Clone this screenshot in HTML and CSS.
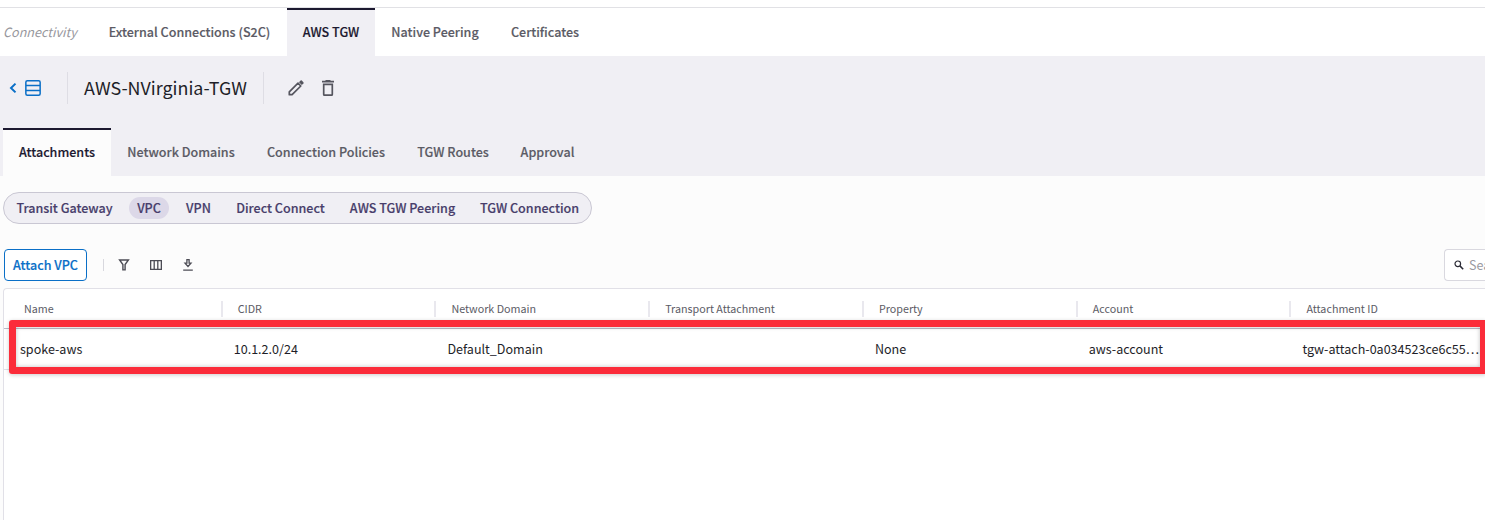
FILE: index.html
```html
<!DOCTYPE html>
<html lang="en">
<head>
<meta charset="utf-8">
<title>AWS TGW</title>
<link rel="stylesheet" href="styles.css">
</head>
<body>
<nav class="topnav">
  <span class="section-label">Connectivity</span>
  <a class="tab tab-external"><span>External Connections (S2C)</span></a>
  <a class="tab tab-aws active"><span>AWS TGW</span></a>
  <a class="tab tab-native"><span>Native Peering</span></a>
  <a class="tab tab-cert"><span>Certificates</span></a>
</nav>
<header class="page-head">
  <div class="title-row">
    <div class="back">
      <svg width="8" height="12" viewBox="0 0 8 12"><path d="M6.500 1.600 2 6l4.500 4.400" fill="none" stroke="#0a6fc7" stroke-width="2"/></svg>
      <svg width="16" height="16" viewBox="0 0 16 16" fill="none" stroke="#0a6fc7" stroke-width="1.500"><rect x=".85" y=".85" width="14.300" height="14.300" rx="1.500"/><path d="M1 5.600h14M1 10.400h14"/></svg>
    </div>
    <h1 class="title">AWS-NVirginia-TGW</h1>
    <div class="actions">
      <svg width="16" height="16" viewBox="0 0 16 16"><path d="M1.300 14.700v-2.800l8.700-8.700 2.800 2.800-8.700 8.700z" fill="none" stroke="#55555e" stroke-width="1.700" stroke-linejoin="round"/><path d="M11 2.200 12.600.6q.6-.5 1.200 0l1.600 1.600q.5.6 0 1.200L13.800 5z" fill="#55555e"/></svg>
      <svg width="16" height="16" viewBox="0 0 16 16" fill="none" stroke="#55555e" stroke-width="1.700"><path d="M2 1.700h12M5.500.9h5"/><path d="M3.700 4.300h8.600v10.100q0 .7-.7.7H4.400q-.7 0-.7-.7z"/></svg>
    </div>
  </div>
  <nav class="subnav">
    <a class="tab tab-attach active"><span>Attachments</span></a>
    <a class="tab tab-domains"><span>Network Domains</span></a>
    <a class="tab tab-policies"><span>Connection Policies</span></a>
    <a class="tab tab-routes"><span>TGW Routes</span></a>
    <a class="tab tab-approval"><span>Approval</span></a>
  </nav>
</header>
<main class="content">
  <div class="pills">
    <a class="pill pill-tg">Transit Gateway</a>
    <a class="pill pill-vpc selected">VPC</a>
    <a class="pill pill-vpn">VPN</a>
    <a class="pill pill-dc">Direct Connect</a>
    <a class="pill pill-peer">AWS TGW Peering</a>
    <a class="pill pill-conn">TGW Connection</a>
  </div>
  <div class="toolbar">
    <button class="attach">Attach VPC</button>
    <div class="tools">
      <svg width="12" height="12" viewBox="0 0 12 12" fill="none" stroke="#4c4c55" stroke-width="1.400"><path d="M1.600 1h8.800L7.100 5.500v5.400H4.900V5.500z"/></svg>
      <svg width="12" height="12" viewBox="0 0 12 12" fill="none" stroke="#4c4c55" stroke-width="1.300"><path d="M.650 1.650h10.700v8.700H.650zM4.200 1.500v9M7.800 1.500v9"/></svg>
      <svg width="12" height="12" viewBox="0 0 12 12" fill="none" stroke="#4c4c55" stroke-width="1.300"><path d="M4.900.7h2.200v3.400h1.900L6 7.500 3 4.100h1.900zM1.200 11.100h9.600"/></svg>
    </div>
    <div class="search">
      <svg width="10" height="10" viewBox="0 0 10 10" fill="none" stroke="#2b2b35" stroke-width="1.200"><circle cx="3.800" cy="3.800" r="2.800"/><path d="M5.900 5.900 9.200 9.200" stroke-width="1.500"/></svg>
      <span>Search</span>
    </div>
  </div>
  <section class="table">
    <div class="row head">
      <div>Name</div><div>CIDR</div><div>Network Domain</div><div>Transport Attachment</div><div>Property</div><div>Account</div><div>Attachment ID</div>
    </div>
    <div class="row body">
      <div>spoke-aws</div><div>10.1.2.0/24</div><div>Default_Domain</div><div></div><div>None</div><div>aws-account</div><div>tgw-attach-0a034523ce6c55…</div>
    </div>
    <div class="highlight"></div>
  </section>
</main>
</body>
</html>
```
FILE: styles.css
```css
* { box-sizing: border-box; }
body {
  margin: 0;
  width: 1485px;
  height: 520px;
  overflow: hidden;
  display: flex;
  flex-direction: column;
  background: #fcfcfc;
  color: #1e1e28;
  font-family: "Noto Sans CJK SC", "Noto Sans", sans-serif;
  font-size: 12.56px;
  line-height: 20px;
}
svg { display: block; flex: none; }
.topnav {
  margin-top: 7px;
  height: 49px;
  border-top: 1px solid #e1e1e5;
  background: #fff;
  box-shadow: 0 -7px #fff;
  display: flex;
}
.section-label {
  width: 93px;
  padding: 14px 0 0 3px;
  font-style: italic;
  font-size: 12.6px;
  color: #97979d;
}
.tab {
  display: flex;
  justify-content: center;
  padding-top: 14px;
  height: 48px;
  font-weight: 500;
  color: #5b5b65;
  white-space: nowrap;
}
.tab, .pill, .attach { -webkit-text-stroke: .15px currentColor; }
.tab.active {
  border-top: 2px solid #1c1930;
  padding-top: 12px;
  color: #1c1930;
}
.topnav .active { background: #f0eff4; }
.tab-external { width: 194px; padding-right: 1px; }
.tab-aws { width: 88px; }
.tab-native { width: 120px; }
.tab-cert { width: 100px; }
.page-head {
  height: 120px;
  flex: none;
  background: #f0eff4;
}
.title-row {
  height: 72px;
  padding-top: 16px;
  display: flex;
}
.back {
  width: 68px;
  height: 32px;
  padding-left: 9px;
  border-right: 1px solid #dedde4;
  display: flex;
  align-items: center;
  gap: 8px;
}
.title {
  margin: 0;
  width: 196px;
  height: 32px;
  padding-left: 16px;
  border-right: 1px solid #dedde4;
  font-size: 17.9px;
  font-weight: 400;
  line-height: 30px;
  white-space: nowrap;
}
.actions {
  padding-left: 24px;
  height: 32px;
  display: flex;
  align-items: center;
  gap: 16px;
}
.subnav { display: flex; padding-left: 3px; }
.subnav .active { background: #fcfcfc; }
.tab-attach { width: 108px; }
.tab-domains { width: 140px; }
.tab-policies { width: 150px; }
.tab-routes { width: 104px; }
.tab-approval { width: 85px; }
.content {
  flex: 1;
  padding: 16px 0 0 3px;
  display: flex;
  flex-direction: column;
}
.pills {
  width: 589px;
  height: 32px;
  flex: none;
  padding-left: 2px;
  border: 1px solid #c9c7d3;
  border-radius: 16px;
  background: #f0eff4;
  display: flex;
  align-items: center;
}
.pill {
  flex: none;
  height: 22px;
  line-height: 22px;
  border-radius: 11px;
  text-align: center;
  white-space: nowrap;
  font-weight: 500;
  color: #483e6b;
}
.pill.selected { background: #dcd8e8; }
.pill-tg { width: 117px; margin-right: 6px; }
.pill-vpc { width: 40px; }
.pill-vpn { width: 59px; }
.pill-dc { width: 105px; margin-right: 9px; }
.pill-peer { width: 121px; }
.pill-conn { width: 101px; margin-left: 16px; }
.toolbar {
  height: 64px;
  flex: none;
  padding: 25px 0 0 1px;
  display: flex;
}
.attach {
  width: 83px;
  height: 32px;
  padding: 0;
  border: 1px solid #0a6fc7;
  border-radius: 4px;
  background: #fff;
  color: #0a6fc7;
  font: 500 12.56px/30px "Noto Sans CJK SC", "Noto Sans", sans-serif;
  white-space: nowrap;
}
.tools {
  margin: 10px 0 0 16px;
  height: 12px;
  padding-left: 14px;
  border-left: 1px solid #d8d8de;
  display: flex;
  gap: 20px;
}
.search {
  margin-left: auto;
  width: 41px;
  height: 32px;
  padding-left: 9px;
  overflow: hidden;
  border: 1px solid #d9d8df;
  border-right: 0;
  border-radius: 4px 0 0 4px;
  background: #fff;
  display: flex;
  align-items: center;
  gap: 5px;
  color: #9a9aa2;
}
.table {
  position: relative;
  flex: 1;
  border: solid #e1e0e7;
  border-width: 1px 0 0 1px;
  border-top-left-radius: 4px;
  background: #fff;
}
.row {
  display: grid;
  grid-template-columns: repeat(7, 213.74px);
  padding-left: 5px;
  overflow: hidden;
  white-space: nowrap;
}
.head {
  height: 40px;
  padding-top: 12px;
  border-bottom: 1px solid #bcbac8;
  font-size: 10.74px;
  line-height: 15px;
  color: #5b5b65;
}
.head div { padding-left: 15px; border-right: 2px solid #e9e8ee; height: 16px; }
.body {
  height: 41px;
  line-height: 40px;
  border-bottom: 1px solid #e1e0e7;
}
.body div { padding-left: 11px; }
.highlight {
  position: absolute;
  left: 5px;
  right: -2px;
  top: 31px;
  height: 54px;
  border: 7px solid #fb2c3a;
  border-radius: 3px;
  box-shadow: 0 1px 4px rgba(0,0,0,.2), inset 0 0 4px rgba(0,0,0,.25);
}
```
